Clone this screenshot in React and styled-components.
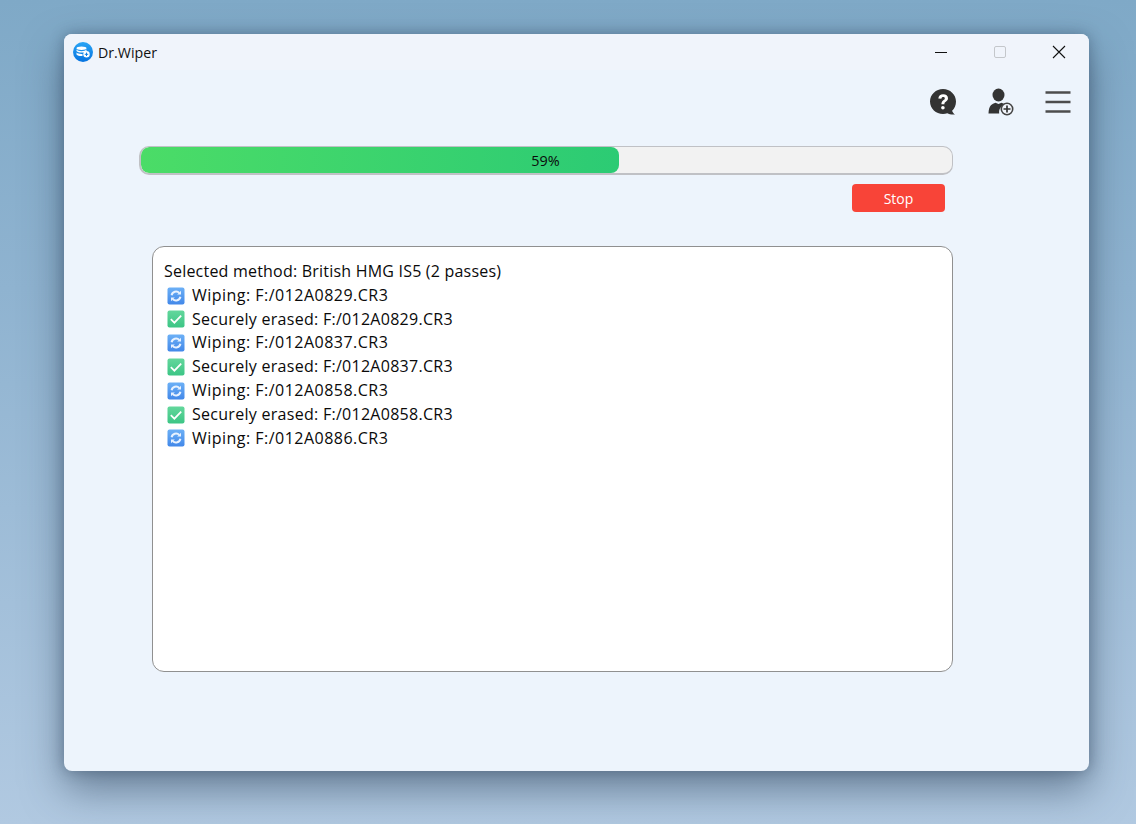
import React from 'react';
import styled, { createGlobalStyle } from 'styled-components';

const FONT = `'Open Sans', 'Noto Sans', 'Liberation Sans', sans-serif`;

const logLines = [
  { kind: 'wipe', text: 'Wiping: F:/012A0829.CR3' },
  { kind: 'done', text: 'Securely erased: F:/012A0829.CR3' },
  { kind: 'wipe', text: 'Wiping: F:/012A0837.CR3' },
  { kind: 'done', text: 'Securely erased: F:/012A0837.CR3' },
  { kind: 'wipe', text: 'Wiping: F:/012A0858.CR3' },
  { kind: 'done', text: 'Securely erased: F:/012A0858.CR3' },
  { kind: 'wipe', text: 'Wiping: F:/012A0886.CR3' },
];

const Logo = () => (
  <svg width="20" height="20" viewBox="0 0 20 20">
    <defs>
      <linearGradient id="logoFill" x1="0" y1="0" x2="0" y2="1">
        <stop offset="0" stopColor="#2aa5f5" />
        <stop offset="1" stopColor="#0673e0" />
      </linearGradient>
    </defs>
    <circle cx="10" cy="10" r="10" fill="url(#logoFill)" />
    <ellipse cx="8.5" cy="6.2" rx="5" ry="1.7" fill="#fff" />
    <path d="M3.5 7.6c1 1.2 2.8 1.6 5 1.6s4-.4 5-1.6v1.4c-1 1.2-2.8 1.5-5 1.5s-4-.3-5-1.5z" fill="#fff" />
    <path d="M3.5 10.6c1 1.1 2.8 1.4 5 1.4l1 0v1.9l-1 .1c-2.2 0-4-.4-5-1.5z" fill="#fff" />
    <circle cx="13.5" cy="12.3" r="3.2" fill="#fff" />
    <path d="M13.5 10.6v3.4M11.8 12.3h3.4" stroke="#0b7fe6" strokeWidth="1" />
  </svg>
);

const MinimizeIcon = () => (
  <svg width="12" height="12" viewBox="0 0 12 12">
    <path d="M0 6.5h12" stroke="#111" strokeWidth="1" />
  </svg>
);

const MaximizeIcon = () => (
  <svg width="12" height="12" viewBox="0 0 12 12">
    <rect x="0.5" y="0.5" width="11" height="11" rx="1.5" fill="none" stroke="#c4c7cb" strokeWidth="1" />
  </svg>
);

const CloseIcon = () => (
  <svg width="14" height="14" viewBox="0 0 14 14">
    <path d="M1 1l12 12M13 1L1 13" stroke="#111" strokeWidth="1.1" />
  </svg>
);

const HelpIcon = () => (
  <svg width="28" height="28" viewBox="0 0 28 28">
    <path d="M14 1C7 1 1 6.500 1 13.500S7 26 14 26c1.600 0 3-.3 4.300-.8 1.600 1.100 4.500 1.500 7.700 1.300-1.500-.9-2.500-2.200-2.900-3.700C25.500 20.500 27 17.300 27 13.500 27 6.500 21 1 14 1z" fill="#333" />
    <path d="M9.300 10.500c.2-2.700 2.200-4.200 4.900-4.200 2.800 0 4.800 1.500 4.800 3.900 0 1.700-1 2.700-2.200 3.500-1.100.8-1.400 1.300-1.400 2.500h-3c0-2 .6-3 1.900-4 1-.7 1.500-1.100 1.500-1.800 0-.8-.7-1.300-1.600-1.300-1 0-1.700.6-1.800 1.600z" fill="#fff" />
    <circle cx="13.900" cy="19.800" r="1.800" fill="#fff" />
  </svg>
);

const UserAddIcon = () => (
  <svg width="28" height="28" viewBox="0 0 28 28">
    <ellipse cx="11.500" cy="7" rx="6" ry="6.500" fill="#333" />
    <path d="M1.500 25.500c.2-4 .8-6.600 2.400-8.200 1.300-1.300 2.900-2 4.600-2.500l3 1.300 3-1.300c1.300.4 2.500 1 3.400 1.700-3.800 1.200-6.300 4.500-5.700 9z" fill="#333" />
    <circle cx="20" cy="21" r="5.700" fill="#f1f4fa" stroke="#444" strokeWidth="1.600" />
    <path d="M20 17.500v7M16.500 21h7" stroke="#333" strokeWidth="1.700" />
  </svg>
);

const MenuIcon = () => (
  <svg width="26" height="24" viewBox="0 0 26 24">
    <path d="M0.500 2.500h25M0.500 12h25M0.500 21.500h25" stroke="#4d4d4d" strokeWidth="2.500" />
  </svg>
);

const WipeBadge = () => (
  <svg width="18" height="18" viewBox="0 0 18 18">
    <defs>
      <linearGradient id="wipeFill" x1="0" y1="0" x2="0" y2="1">
        <stop offset="0" stopColor="#6cb0f6" />
        <stop offset="1" stopColor="#4288e9" />
      </linearGradient>
    </defs>
    <rect x="0.500" y="0.500" width="17" height="17" rx="2" fill="url(#wipeFill)" />
    <path d="M4.600 8.200a4.500 4.500 0 0 1 7.700-2.300" fill="none" stroke="#e8f2ff" strokeWidth="2" />
    <path d="M14 3.800v3.800h-3.800z" fill="#e8f2ff" />
    <path d="M13.400 9.800a4.500 4.500 0 0 1-7.700 2.300" fill="none" stroke="#e8f2ff" strokeWidth="2" />
    <path d="M4 14.200v-3.800h3.800z" fill="#e8f2ff" />
  </svg>
);

const DoneBadge = () => (
  <svg width="18" height="18" viewBox="0 0 18 18">
    <defs>
      <linearGradient id="doneFill" x1="0" y1="0" x2="0" y2="1">
        <stop offset="0" stopColor="#63d79c" />
        <stop offset="1" stopColor="#3cc585" />
      </linearGradient>
    </defs>
    <rect x="0.500" y="0.500" width="17" height="17" rx="2" fill="url(#doneFill)" />
    <path d="M3.800 9.200l3.600 3.500 6.800-7" fill="none" stroke="#fff" strokeWidth="1.700" />
  </svg>
);

const App = () => {
  const progress = 59;

  return (
    <>
      <GlobalStyle />
      <Desktop>
        <Window>
          <TitleBar>
            <Brand>
              <Logo />
              <AppName>Dr.Wiper</AppName>
            </Brand>
            <WindowControls>
              <ControlButton><MinimizeIcon /></ControlButton>
              <ControlButton><MaximizeIcon /></ControlButton>
              <ControlButton><CloseIcon /></ControlButton>
            </WindowControls>
          </TitleBar>

          <Toolbar>
            <ToolButton><HelpIcon /></ToolButton>
            <ToolButton><UserAddIcon /></ToolButton>
            <ToolButton><MenuIcon /></ToolButton>
          </Toolbar>

          <Content>
            <ProgressTrack>
              <ProgressFill style={{ width: `${progress}%` }} />
              <ProgressLabel>{progress}%</ProgressLabel>
            </ProgressTrack>
            <Actions>
              <StopButton>Stop</StopButton>
            </Actions>
            <LogBox>
              <LogHeading>Selected method: British HMG IS5 (2 passes)</LogHeading>
              {logLines.map((line, i) => (
                <LogRow key={i}>
                  {line.kind === 'wipe' ? <WipeBadge /> : <DoneBadge />}
                  <LogText $kind={line.kind}>{line.text}</LogText>
                </LogRow>
              ))}
            </LogBox>
          </Content>
        </Window>
      </Desktop>
    </>
  );
};

const GlobalStyle = createGlobalStyle`
  html, body {
    margin: 0;
    padding: 0;
  }
  * {
    box-sizing: border-box;
  }
`;

const Desktop = styled.div`
  width: 1136px;
  height: 824px;
  overflow: hidden;
  padding: 34px 0 0 64px;
  background: linear-gradient(180deg, #7fa9c7 0%, #8fb3d0 35%, #b1c9e1 100%);
  font-family: ${FONT};
  color: #111;
`;

const Window = styled.div`
  width: 1025px;
  height: 737px;
  border-radius: 8px;
  background: #edf4fc;
  box-shadow: 0 18px 40px rgba(45, 65, 90, 0.55), 0 0 14px rgba(45, 65, 90, 0.4);
  overflow: hidden;
`;

const TitleBar = styled.div`
  height: 36px;
  display: flex;
  align-items: center;
  justify-content: space-between;
  background: #f0f4fb;
`;

const Brand = styled.div`
  display: flex;
  align-items: center;
  gap: 5px;
  padding-left: 9px;
`;

const AppName = styled.span`
  font-size: 14.2px;
`;

const WindowControls = styled.div`
  display: flex;
  align-items: center;
  padding-right: 1px;
`;

const ControlButton = styled.div`
  width: 59px;
  height: 36px;
  display: flex;
  align-items: center;
  justify-content: center;
`;

const Toolbar = styled.div`
  height: 64px;
  display: flex;
  align-items: center;
  justify-content: flex-end;
  gap: 30px;
  padding-right: 18px;
`;

const ToolButton = styled.div`
  display: flex;
  align-items: center;
  justify-content: center;
`;

const Content = styled.div`
  display: flex;
  flex-direction: column;
  padding: 12px 136px 0 75px;
`;

const ProgressTrack = styled.div`
  position: relative;
  height: 29px;
  border-style: solid;
  border-color: #c0c1c5;
  border-width: 1px 1px 2px 2px;
  border-radius: 10px;
  background: #f2f2f2;
  overflow: hidden;
`;

const ProgressFill = styled.div`
  height: 100%;
  border-radius: 8px;
  background: linear-gradient(90deg, #4bdc67 0%, #2ccb74 100%);
`;

const ProgressLabel = styled.span`
  position: absolute;
  inset: 0;
  display: flex;
  align-items: center;
  justify-content: center;
  padding-right: 2px;
  font-size: 14.4px;
  color: #0a0a0a;
`;

const Actions = styled.div`
  display: flex;
  justify-content: flex-end;
  padding: 9px 8px 0 0;
`;

const StopButton = styled.div`
  width: 93px;
  height: 28px;
  display: flex;
  align-items: center;
  justify-content: center;
  border-radius: 4px;
  background: #f84438;
  color: #fff;
  font-size: 14px;
`;

const LogBox = styled.div`
  height: 426px;
  margin: 34px 0 0 13px;
  padding: 13px 11px;
  border: 1px solid #909090;
  border-radius: 12px;
  background: #fff;
  font-size: 16px;
  line-height: 23.8px;
  color: #0a0a0a;
`;

const LogHeading = styled.div`
  letter-spacing: 0.21px;
`;

const LogRow = styled.div`
  display: flex;
  align-items: center;
  gap: 7px;
  padding-left: 3px;
`;

const LogText = styled.span`
  letter-spacing: ${(p) => (p.$kind === 'wipe' ? '0.48px' : '0.28px')};
`;

export default App;
